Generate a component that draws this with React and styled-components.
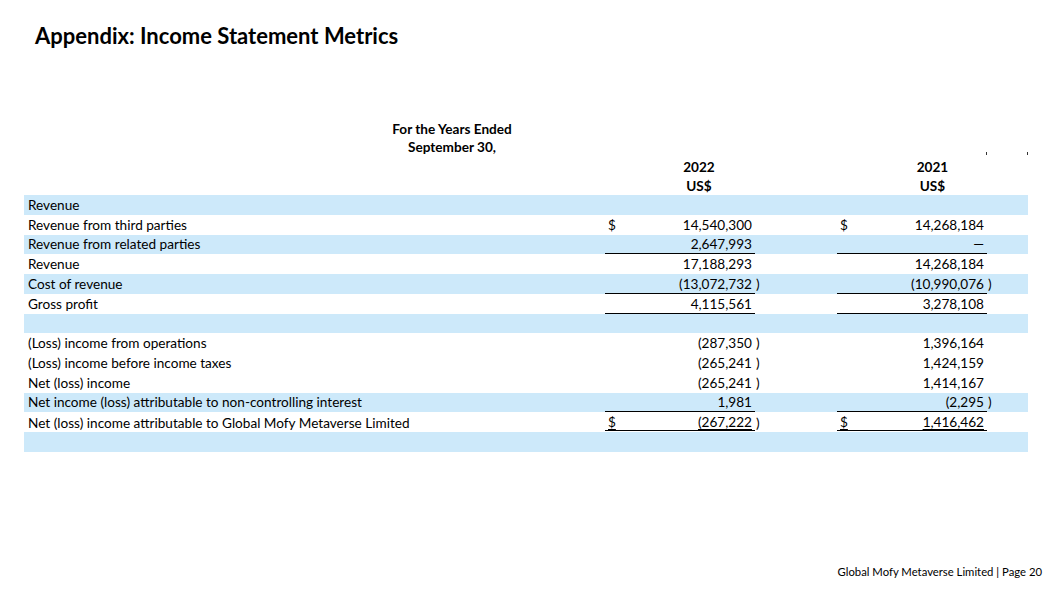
import React from "react";
import styled, { createGlobalStyle } from "styled-components";

const GlobalStyle = createGlobalStyle`
  html, body {
    margin: 0;
    padding: 0;
    background: #ffffff;
  }
  body {
    font-family: Lato, "Open Sans", "Liberation Sans", sans-serif;
    color: #000;
  }
`;

const Slide = styled.div`
  width: 1050px;
  height: 590px;
  display: flex;
  flex-direction: column;
  box-sizing: border-box;
  position: relative;
  overflow: hidden;
`;

const Title = styled.h1`
  margin: 22px 0 0 35px;
  font-size: 22px;
  font-weight: 700;
  line-height: 28px;
`;

const Table = styled.div`
  margin: 70px 0 0 24px;
  width: 1004px;
  display: flex;
  flex-direction: column;
  font-size: 13.6px;
`;

const Grid = styled.div`
  display: grid;
  grid-template-columns: 581px 150px 82px 150px 41px;
  height: ${(p) => p.$h || 19.75}px;
  align-items: center;
  background: ${(p) => (p.$shade ? "#cde9fa" : "transparent")};
`;

const PeriodHead = styled.div`
  width: 200px;
  margin-left: 328px;
  text-align: center;
  font-weight: 700;
  line-height: 18px;
`;

const YearHead = styled.div`
  grid-column: ${(p) => p.$col};
  text-align: center;
  font-weight: 700;
  padding-right: ${(p) => p.$shift || 0}px;
`;

const Tick = styled.div`
  grid-column: ${(p) => p.$col};
  justify-self: ${(p) => p.$align};
  width: 1px;
  height: 3px;
  background: #333;
  margin-top: -6px;
`;

const Label = styled.div`
  padding-left: 4px;
  white-space: nowrap;
`;

const Amount = styled.div`
  height: 100%;
  box-sizing: border-box;
  display: flex;
  justify-content: space-between;
  align-items: center;
  padding: 0 3px 0 3px;
  border-bottom: ${(p) =>
    p.$rule === "double"
      ? "3px double #000"
      : p.$rule === "single"
      ? "1px solid #000"
      : "none"};
  padding-top: ${(p) => (p.$rule === "double" ? "2px" : p.$rule === "single" ? "1px" : "0")};
  text-decoration: ${(p) => (p.$rule === "double" ? "underline" : "none")};
  text-underline-offset: 2px;
`;

const Paren = styled.div`
  padding-left: 1px;
`;

const Footer = styled.div`
  position: absolute;
  right: 8px;
  bottom: 12px;
  font-size: 11.3px;
`;

const rows = [
  { label: "Revenue", shade: true },
  { label: "Revenue from third parties", a: ["$", "14,540,300"], b: ["$", "14,268,184"] },
  { label: "Revenue from related parties", shade: true, a: ["", "2,647,993"], b: ["", "—"], rule: "single" },
  { label: "Revenue", a: ["", "17,188,293"], b: ["", "14,268,184"] },
  { label: "Cost of revenue", shade: true, a: ["", "(13,072,732"], pa: ")", b: ["", "(10,990,076"], pb: ")", rule: "single" },
  { label: "Gross profit", a: ["", "4,115,561"], b: ["", "3,278,108"], rule: "single" },
  { label: "", shade: true },
  { label: "(Loss) income from operations", a: ["", "(287,350"], pa: ")", b: ["", "1,396,164"] },
  { label: "(Loss) income before income taxes", a: ["", "(265,241"], pa: ")", b: ["", "1,424,159"] },
  { label: "Net (loss) income", a: ["", "(265,241"], pa: ")", b: ["", "1,414,167"] },
  { label: "Net income (loss) attributable to non-controlling interest", shade: true, a: ["", "1,981"], b: ["", "(2,295"], pb: ")", rule: "single" },
  { label: "Net (loss) income attributable to Global Mofy Metaverse Limited", a: ["$", "(267,222"], pa: ")", b: ["$", "1,416,462"], rule: "double" },
  { label: "", shade: true },
];

export default function App() {
  return (
    <>
      <GlobalStyle />
      <Slide>
        <Title>Appendix: Income Statement Metrics</Title>
        <Table>
          <PeriodHead>
            For the Years Ended
            <br />
            September 30,
          </PeriodHead>
          <Grid $h={1}>
            <Tick $col={4} $align="end" />
            <Tick $col={5} $align="end" />
          </Grid>
          <Grid $h={19}>
            <YearHead $col="2 / 4" $shift={44}>2022</YearHead>
            <YearHead $col="4 / 6">2021</YearHead>
          </Grid>
          <Grid $h={19}>
            <YearHead $col="2 / 4" $shift={44}>US$</YearHead>
            <YearHead $col="4 / 6">US$</YearHead>
          </Grid>
          {rows.map((r, i) => (
            <Grid key={i} $shade={r.shade}>
              <Label>{r.label}</Label>
              {r.a ? (
                <Amount $rule={r.rule}>
                  <span>{r.a[0]}</span>
                  <span>{r.a[1]}</span>
                </Amount>
              ) : (
                <div />
              )}
              <Paren>{r.pa}</Paren>
              {r.b ? (
                <Amount $rule={r.rule}>
                  <span>{r.b[0]}</span>
                  <span>{r.b[1]}</span>
                </Amount>
              ) : (
                <div />
              )}
              <Paren>{r.pb}</Paren>
            </Grid>
          ))}
        </Table>
        <Footer>Global Mofy Metaverse Limited | Page 20</Footer>
      </Slide>
    </>
  );
}
